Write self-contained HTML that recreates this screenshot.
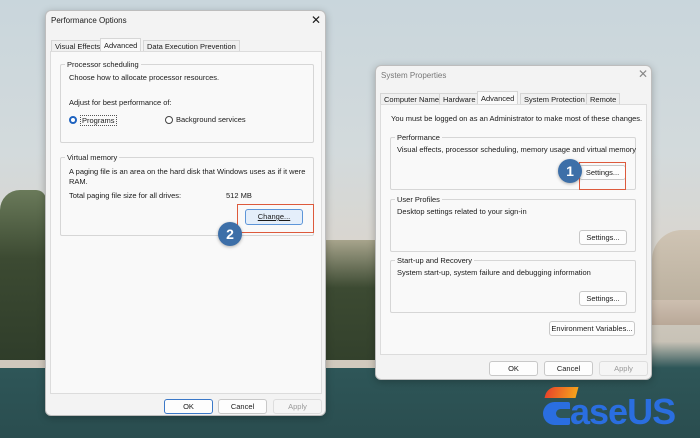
<!DOCTYPE html>
<html><head><meta charset="utf-8"><style>
*{box-sizing:border-box;margin:0;padding:0}
body{width:700px;height:438px;overflow:hidden;position:relative;font-family:"Liberation Sans",sans-serif;font-size:7.5px;color:#1a1a1a;white-space:nowrap;
background:linear-gradient(180deg,#c9d6dc 0%,#d3dadc 35%,#d9d6d0 55%,#c8c2b6 78%,#2e5658 84%,#2a4d4f 100%);}
.a{position:absolute}
.win{position:absolute;background:#f3f3f3;border:1px solid #bdbdbd;border-radius:6px;box-shadow:0 2px 8px rgba(0,0,0,.25)}
.panel{position:absolute;background:#f9f9f9;border:1px solid #dcdcdc}
.grp{position:absolute;border:1px solid #d6d6d6;border-radius:2px}
.grp .lg{position:absolute;top:-5px;left:4px;background:#f9f9f9;padding:0 2px;line-height:9px}
.btn{position:absolute;background:#fdfdfd;border:1px solid #c8c8c8;border-radius:3px;text-align:center;line-height:13px;height:15px;font-size:7.5px}
.tab{position:absolute;border:1px solid #d6d6d6;border-bottom:none;background:#f0f0f0;line-height:11px;height:12px;padding:0 3px;font-size:7.5px}
.tab.s{background:#f9f9f9;line-height:13px;height:14px}
.red{position:absolute;border:1.5px solid #dd5a3c}
.num{position:absolute;width:24px;height:24px;border-radius:50%;background:#3d6fa8;color:#fff;font-weight:bold;font-size:14px;text-align:center;line-height:24px;box-shadow:0 1px 3px rgba(0,0,0,.3)}
</style></head><body>
<div class="a" style="left:0;top:190px;width:46px;height:172px;background:linear-gradient(180deg,#6a7a5a,#3c4a32 40%,#2f3d2a);border-radius:20px 10px 0 0"></div>
<div class="a" style="left:0;top:360px;width:46px;height:8px;background:#cfc7bc"></div>
<div class="a" style="left:652px;top:230px;width:48px;height:80px;background:linear-gradient(180deg,#cfc4b4,#b9ae9c);border-radius:30px 0 0 0"></div>
<div class="a" style="left:326px;top:240px;width:50px;height:120px;background:linear-gradient(180deg,#a7a48c,#3c4a32 40%,#33412c)"></div>
<div class="a" style="left:326px;top:360px;width:50px;height:8px;background:#d1c9bd"></div>
<div class="a" style="left:652px;top:300px;width:48px;height:25px;background:linear-gradient(180deg,#cdbfb0,#b9a898)"></div>

<!-- Performance Options -->
<div class="win" style="left:45px;top:10px;width:281px;height:406px">
 <div class="a" style="left:5px;top:5px;font-size:8px">Performance Options</div>
 <div class="a" style="left:265px;top:2px;font-size:12px">✕</div>
 <div class="tab" style="left:5px;top:29px">Visual Effects</div>
 <div class="tab s" style="left:54px;top:27px">Advanced</div>
 <div class="tab" style="left:97px;top:29px">Data Execution Prevention</div>
 <div class="panel" style="left:4px;top:40px;width:272px;height:343px">
  <div class="grp" style="left:9px;top:12px;width:254px;height:79px"><span class="lg">Processor scheduling</span>
   <div class="a" style="left:8px;top:8px">Choose how to allocate processor resources.</div>
   <div class="a" style="left:8px;top:33px">Adjust for best performance of:</div>
   <div class="a" style="left:8px;top:51px;width:8px;height:8px;border-radius:50%;border:2.5px solid #1f63c0;background:#fff"></div>
   <div class="a" style="left:19px;top:50px;border:1px dotted #555;padding:0 1px">Programs</div>
   <div class="a" style="left:104px;top:51px;width:8px;height:8px;border-radius:50%;border:1px solid #444;background:#fff"></div>
   <div class="a" style="left:115px;top:50px">Background services</div>
  </div>
  <div class="grp" style="left:9px;top:105px;width:254px;height:79px"><span class="lg">Virtual memory</span>
   <div class="a" style="left:8px;top:9px;line-height:10px;white-space:normal;width:240px">A paging file is an area on the hard disk that Windows uses as if it were RAM.</div>
   <div class="a" style="left:8px;top:33px">Total paging file size for all drives:</div>
   <div class="a" style="left:165px;top:33px">512 MB</div>
  </div>
 </div>
 <div class="btn" style="left:118px;top:388px;width:49px;border:1.5px solid #3a78c8">OK</div>
 <div class="btn" style="left:172px;top:388px;width:49px">Cancel</div>
 <div class="btn" style="left:227px;top:388px;width:49px;color:#999;background:#f5f5f5;border-color:#ddd">Apply</div>
</div>
<div class="btn" style="left:245px;top:209px;width:58px;height:16px;background:#e4eefa;border-color:#5d95d8;line-height:14px;text-decoration:underline">Change...</div>
<div class="red" style="left:237px;top:204px;width:77px;height:29px"></div>
<div class="num" style="left:218px;top:222px">2</div>

<!-- System Properties -->
<div class="win" style="left:375px;top:65px;width:277px;height:315px">
 <div class="a" style="left:5px;top:5px;font-size:8px;color:#777">System Properties</div>
 <div class="a" style="left:262px;top:1px;font-size:12px;color:#888">✕</div>
 <div class="tab" style="left:4px;top:27px">Computer Name</div>
 <div class="tab" style="left:63px;top:27px">Hardware</div>
 <div class="tab s" style="left:101px;top:25px">Advanced</div>
 <div class="tab" style="left:144px;top:27px">System Protection</div>
 <div class="tab" style="left:210px;top:27px">Remote</div>
 <div class="panel" style="left:4px;top:38px;width:267px;height:251px">
  <div class="a" style="left:10px;top:9px">You must be logged on as an Administrator to make most of these changes.</div>
  <div class="grp" style="left:9px;top:32px;width:246px;height:53px"><span class="lg">Performance</span>
   <div class="a" style="left:6px;top:7px">Visual effects, processor scheduling, memory usage and virtual memory</div></div>
  <div class="grp" style="left:9px;top:94px;width:246px;height:53px"><span class="lg">User Profiles</span>
   <div class="a" style="left:6px;top:7px">Desktop settings related to your sign-in</div></div>
  <div class="grp" style="left:9px;top:155px;width:246px;height:53px"><span class="lg">Start-up and Recovery</span>
   <div class="a" style="left:6px;top:7px">System start-up, system failure and debugging information</div></div>
 </div>
 <div class="btn" style="left:203px;top:99px;width:47px">Settings...</div>
 <div class="btn" style="left:203px;top:164px;width:48px">Settings...</div>
 <div class="btn" style="left:203px;top:225px;width:48px">Settings...</div>
 <div class="btn" style="left:173px;top:255px;width:86px">Environment Variables...</div>
 <div class="btn" style="left:113px;top:295px;width:49px">OK</div>
 <div class="btn" style="left:168px;top:295px;width:49px">Cancel</div>
 <div class="btn" style="left:223px;top:295px;width:49px;color:#999;background:#f5f5f5;border-color:#ddd">Apply</div>
</div>
<div class="red" style="left:579px;top:162px;width:47px;height:28px"></div>
<div class="num" style="left:558px;top:159px">1</div>

<!-- EaseUS logo -->
<div class="a" style="left:546px;top:387px;width:31px;height:11px;background:linear-gradient(90deg,#e8452a,#f5a31c);border-radius:8px 0 0 0;transform:skewX(-15deg)"></div>
<div class="a" style="left:543px;top:402px;width:27px;height:23px;background:#2a6ee0;border-radius:12px 2px 2px 12px"></div>
<div class="a" style="left:556px;top:409px;width:14px;height:9px;background:#2e5658;border-radius:5px 0 0 5px"></div>
<div class="a" style="left:570px;top:392px;font-size:36px;font-weight:bold;color:#2a6ee0;letter-spacing:-1px;line-height:40px">aseUS</div>
</body></html>
